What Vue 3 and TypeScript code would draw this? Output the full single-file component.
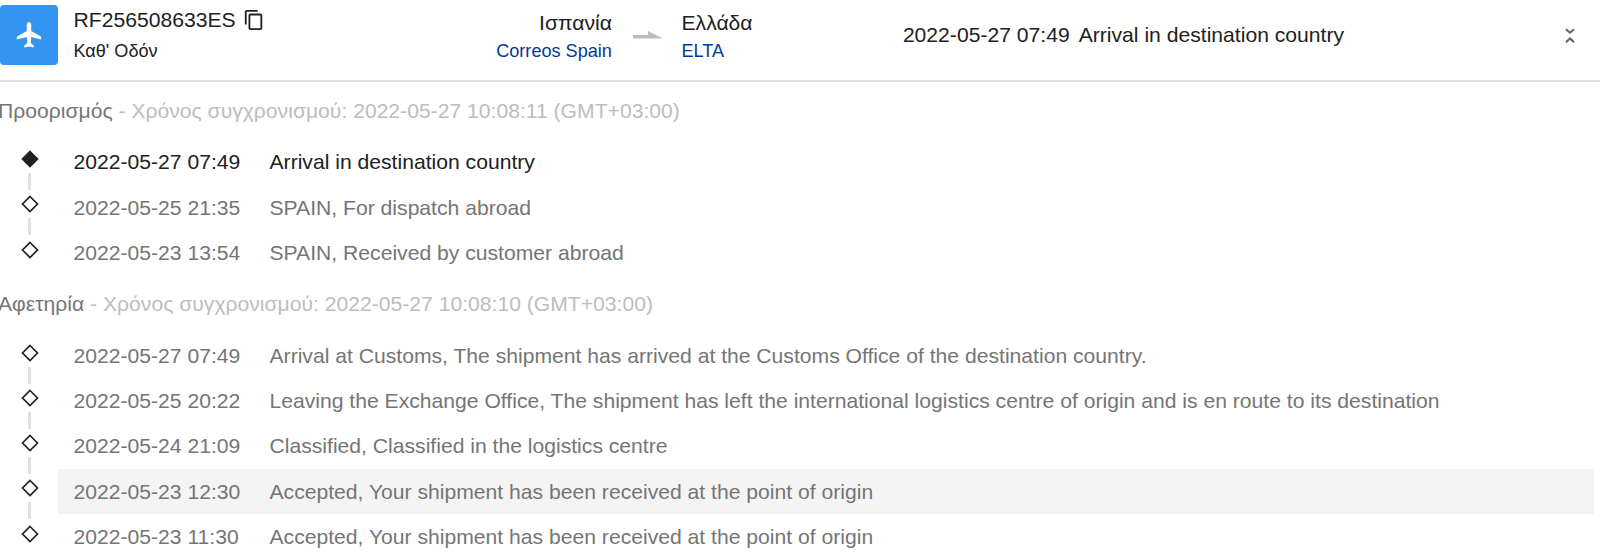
<script setup lang="ts">
interface TrackEvent {
  time: string
  text: string
  latest?: boolean
  hovered?: boolean
}

interface TrackGroup {
  place: string
  synced: string
  events: TrackEvent[]
}

const groups: TrackGroup[] = [
  {
    place: 'Προορισμός',
    synced: '2022-05-27 10:08:11 (GMT+03:00)',
    events: [
      { time: '2022-05-27 07:49', text: 'Arrival in destination country', latest: true },
      { time: '2022-05-25 21:35', text: 'SPAIN, For dispatch abroad' },
      { time: '2022-05-23 13:54', text: 'SPAIN, Received by customer abroad' },
    ],
  },
  {
    place: 'Αφετηρία',
    synced: '2022-05-27 10:08:10 (GMT+03:00)',
    events: [
      { time: '2022-05-27 07:49', text: 'Arrival at Customs, The shipment has arrived at the Customs Office of the destination country.' },
      { time: '2022-05-25 20:22', text: 'Leaving the Exchange Office, The shipment has left the international logistics centre of origin and is en route to its destination' },
      { time: '2022-05-24 21:09', text: 'Classified, Classified in the logistics centre' },
      { time: '2022-05-23 12:30', text: 'Accepted, Your shipment has been received at the point of origin', hovered: true },
      { time: '2022-05-23 11:30', text: 'Accepted, Your shipment has been received at the point of origin' },
    ],
  },
]
</script>

<template>
  <main class="tracking">
    <header class="summary">
      <div class="badge">
        <svg width="26" height="26" viewBox="0 0 26 26" fill="#fff">
          <path d="M13 0c1.200 0 2.200 1.200 2.200 2.800v6.200l9.200 5.200c.5.300.8.800.8 1.400v1.900l-10-2.600-.5 6.200 3 2.300v2.100L13 24.400l-4.700 1.100v-2.100l3-2.300-.5-6.200-10 2.600v-1.900c0-.600.3-1.100.8-1.400L10.800 9V2.800C10.800 1.200 11.800 0 13 0z" />
        </svg>
      </div>
      <div class="parcel">
        <div class="number">
          <span>RF256508633ES</span>
          <svg class="copy" width="22" height="22" viewBox="0 0 24 24" fill="#212121">
            <path d="M16 1H4a2 2 0 0 0-2 2v14h2V3h12V1zm3 4H8a2 2 0 0 0-2 2v14a2 2 0 0 0 2 2h11a2 2 0 0 0 2-2V7a2 2 0 0 0-2-2zm0 16H8V7h11v14z" />
          </svg>
        </div>
        <div class="small">Καθ' Οδόν</div>
      </div>
      <div class="country from">
        <div>Ισπανία</div>
        <a class="small carrier">Correos Spain</a>
      </div>
      <svg class="arrow" width="30" height="8" viewBox="0 0 30 8" fill="#bdbdbd">
        <path d="M0 4H15V0L30 7.500H0z" />
      </svg>
      <div class="country to">
        <div>Ελλάδα</div>
        <a class="small carrier">ELTA</a>
      </div>
      <div class="last">
        <span>2022-05-27 07:49</span>
        <span>Arrival in destination country</span>
      </div>
      <svg class="fold" width="10" height="16" viewBox="0 0 10 16" fill="none" stroke="#616161" stroke-width="2">
        <path d="M1 1.200l4 3.500 4-3.500M1 14.300l4-3.800 4 3.800" />
      </svg>
    </header>

    <section v-for="group in groups" :key="group.place">
      <h2 class="heading"><span class="place">{{ group.place }}</span> - Χρόνος συγχρονισμού: {{ group.synced }}</h2>
      <ul class="events">
        <li v-for="(event, i) in group.events" :key="i" class="event" :class="{ latest: event.latest, hovered: event.hovered }">
          <div class="rail">
            <svg class="diamond" width="18" height="18" viewBox="0 0 18 18" stroke="#212121" stroke-width="1.7">
              <path d="M9 1.500L16.500 9L9 16.500L1.500 9z" :fill="event.latest ? '#212121' : 'none'" />
            </svg>
            <i v-if="i < group.events.length - 1" class="line"></i>
          </div>
          <div class="body">
            <time>{{ event.time }}</time>
            <span>{{ event.text }}</span>
          </div>
        </li>
      </ul>
    </section>
  </main>
</template>

<style>
html, body { margin: 0; background: #fff; overflow: hidden; }
</style>

<style scoped>
.tracking {
  width: 1600px;
  height: 556px;
  overflow: hidden;
  font-family: "Liberation Sans", Arial, sans-serif;
  font-size: 21.14px;
  color: #212121;
  white-space: nowrap;
}
.summary {
  display: flex;
  align-items: flex-start;
  box-sizing: border-box;
  height: 81.5px;
  padding-top: 5px;
  border-bottom: 2px solid #e0e0e0;
}
.badge {
  display: flex;
  align-items: center;
  justify-content: center;
  width: 58px;
  height: 60px;
  border-radius: 4px;
  background: #3395f0;
  flex: none;
}
.parcel { width: 307px; margin-left: 15.500px; }
.number { display: flex; align-items: center; height: 30px; }
.copy { margin-left: 7.500px; }
.small { display: block; font-size: 18.1px; }
.parcel .small { line-height: 32px; }
.country { line-height: 36px; }
.country > div { height: 31px; }
.country .small { line-height: 30px; }
.from { width: 231.4px; text-align: right; }
.to { width: 221.4px; }
.carrier { color: #003a9b; }
.arrow { margin: 26px 18.600px 0 21px; flex: none; }
.last { display: flex; gap: 9px; line-height: 60px; width: 662px; flex: none; }
.fold { margin-top: 23px; flex: none; }
.heading {
  margin: 0 0 0 -2px;
  height: 57.8px;
  line-height: 58px;
  font-size: inherit;
  font-weight: 400;
  color: #bdbdbd;
}
.place { color: #757575; }
.events { margin: 0; padding: 0; list-style: none; }
.event { display: flex; height: 45.25px; color: #757575; }
.latest { color: #212121; }
.rail { display: flex; flex-direction: column; align-items: center; width: 59px; flex: none; padding-top: 10.800px; box-sizing: border-box; }
.diamond { flex: none; }
.line { width: 3px; height: 17px; margin-top: 5px; background: #e0e0e0; flex: none; }
.body { display: flex; width: 1536px; box-sizing: border-box; margin-left: -1px; padding-left: 15.500px; line-height: 45px; }
.body time { width: 196px; flex: none; }
.hovered .body { background: #f4f4f4; }
</style>
